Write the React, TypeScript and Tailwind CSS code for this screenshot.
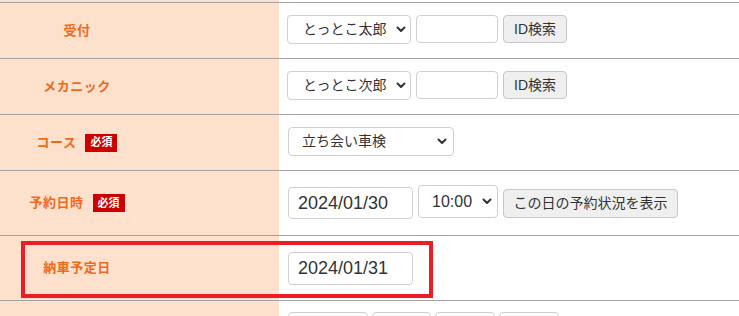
import type { ReactNode } from "react";

const FONT = "font-['Liberation_Sans','Noto_Sans_CJK_JP',sans-serif]";

function Chevron() {
  return (
    <svg width="10" height="7" viewBox="0 0 10 7" className="shrink-0">
      <polyline
        points="1.5,1.5 5,5 8.5,1.5"
        fill="none"
        stroke="#333"
        strokeWidth="2"
        strokeLinecap="round"
        strokeLinejoin="round"
      />
    </svg>
  );
}

function FakeSelect({
  value,
  className,
}: {
  value: string;
  className: string;
}) {
  return (
    <div
      className={`flex items-center justify-between rounded-[4px] border border-[#cfcfcf] bg-white text-[#333] ${className}`}
    >
      <span>{value}</span>
      <Chevron />
    </div>
  );
}

function Required() {
  return (
    <span className="flex h-[18px] w-[32px] items-center justify-center bg-[#cc0000] text-[11px] font-bold text-white">
      必須
    </span>
  );
}

function Row({
  label,
  required,
  height,
  lift,
  children,
  extra,
}: {
  label?: string;
  required?: boolean;
  height: string;
  lift?: boolean;
  children?: ReactNode;
  extra?: ReactNode;
}) {
  return (
    <div className={`relative flex border-t border-[#a3a3a3] ${height}`}>
      <div className="flex w-[279px] shrink-0 items-center bg-[#fee1cc]">
        <div className="flex w-[154px] items-center justify-center gap-[9px]">
          <span className="text-[13px] font-bold tracking-[0.5px] text-[#f06a1c]">
            {label}
          </span>
          {required && <Required />}
        </div>
      </div>
      <div
        className={`flex flex-1 items-center gap-[5px] bg-white pl-[9px] ${lift ? "pb-[3px]" : ""}`}
      >
        {children}
      </div>
      {extra}
    </div>
  );
}

export default function App() {
  return (
    <div className={`h-[316px] w-[739px] overflow-hidden bg-white ${FONT}`}>
      <div className="flex h-[2px]">
        <div className="w-[279px] bg-[#fee1cc]" />
        <div className="flex-1 bg-white" />
      </div>

      <Row label="受付" height="h-[56px]" lift>
        <FakeSelect
          value="とっとこ太郎"
          className="-ml-px h-[29px] w-[124px] pl-[15px] pr-[4px] text-[14px]"
        />
        <input className="h-[28px] w-[82px] rounded-[4px] border border-[#cfcfcf] bg-white" />
        <button className="h-[28px] w-[64px] rounded-[4px] border border-[#c8c8c8] bg-[#efefef] text-[14px] text-[#333]">
          ID検索
        </button>
      </Row>

      <Row label="メカニック" height="h-[56px]" lift>
        <FakeSelect
          value="とっとこ次郎"
          className="-ml-px h-[29px] w-[124px] pl-[15px] pr-[4px] text-[14px]"
        />
        <input className="h-[28px] w-[82px] rounded-[4px] border border-[#cfcfcf] bg-white" />
        <button className="h-[28px] w-[64px] rounded-[4px] border border-[#c8c8c8] bg-[#efefef] text-[14px] text-[#333]">
          ID検索
        </button>
      </Row>

      <Row label="コース" required height="h-[56px]" lift>
        <FakeSelect
          value="立ち会い車検"
          className="h-[29px] w-[166px] pl-[13px] pr-[6px] text-[14px]"
        />
      </Row>

      <Row label="予約日時" required height="h-[65px]">
        <div className="flex h-[32px] w-[125px] items-center rounded-[4px] border border-[#cfcfcf] bg-white pl-[9px] text-[18px] text-[#333]">
          2024/01/30
        </div>
        <FakeSelect
          value="10:00"
          className="-mt-[3px] h-[33px] w-[80px] pl-[13px] pr-[5px] text-[16px]"
        />
        <button className="h-[29px] w-[175px] rounded-[4px] border border-[#c8c8c8] bg-[#efefef] text-[14px] text-[#333]">
          この日の予約状況を表示
        </button>
      </Row>

      <Row
        label="納車予定日"
        height="h-[65px]"
        extra={
          <div className="pointer-events-none absolute left-[21px] top-[5px] h-[57px] w-[412px] border-[4px] border-[#ee1c24]" />
        }
      >
        <div className="flex h-[33px] w-[125px] items-center rounded-[4px] border border-[#cfcfcf] bg-white pl-[9px] text-[18px] text-[#333]">
          2024/01/31
        </div>
      </Row>

      <div className="flex h-[40px] border-t border-[#a3a3a3]">
        <div className="w-[279px] shrink-0 bg-[#fee1cc]" />
        <div className="flex flex-1 items-start gap-[4px] bg-white pl-[9px] pt-[11px]">
          <div className="h-[32px] w-[80px] rounded-[4px] border border-[#cfcfcf]" />
          <div className="h-[32px] w-[59px] rounded-[4px] border border-[#cfcfcf]" />
          <div className="h-[32px] w-[60px] rounded-[4px] border border-[#cfcfcf]" />
          <div className="h-[32px] w-[60px] rounded-[4px] border border-[#cfcfcf]" />
        </div>
      </div>
    </div>
  );
}
